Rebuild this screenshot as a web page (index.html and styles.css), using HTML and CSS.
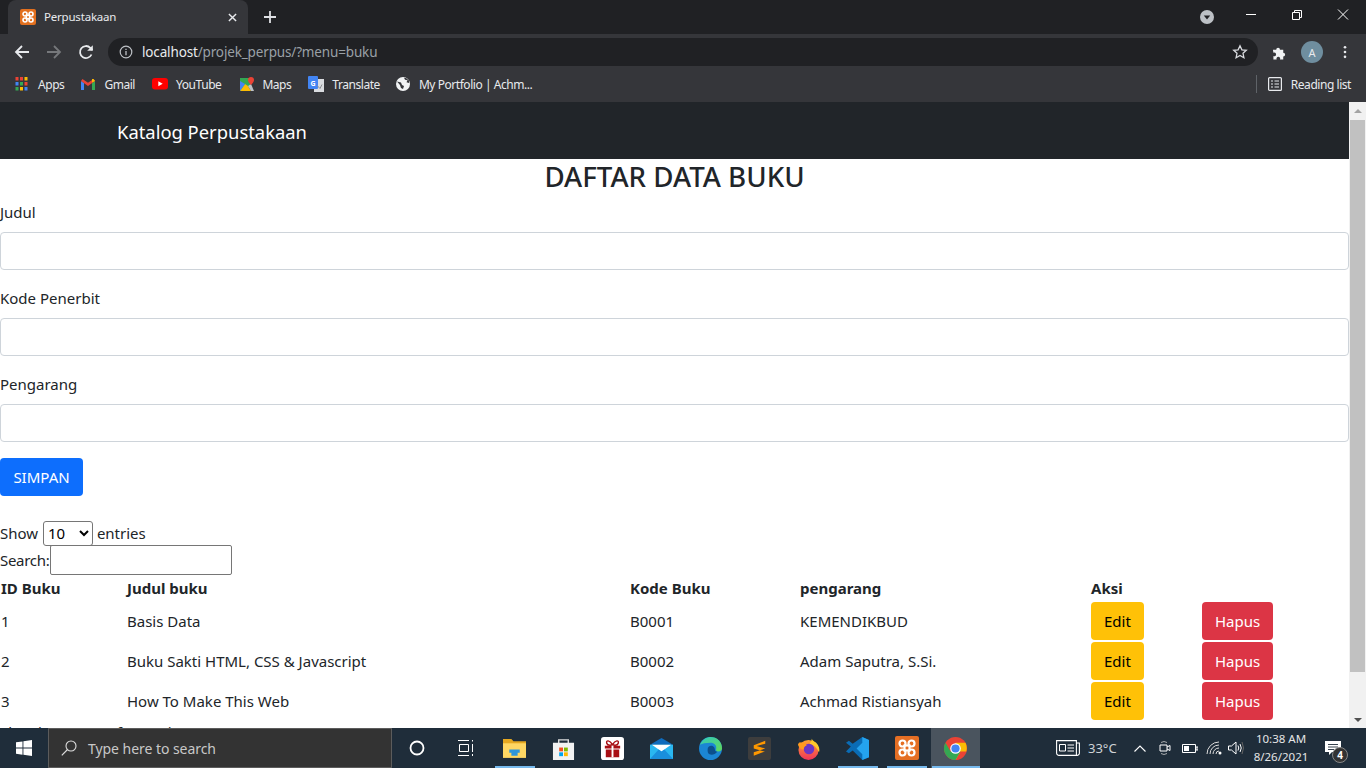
FILE: index.html
```html
<!DOCTYPE html>
<html lang="en">
<head>
    <meta charset="UTF-8">
    <meta name="viewport" content="width=device-width, initial-scale=1.0">
    <title>Perpustakaan</title>
    <link rel="stylesheet" href="styles.css">
</head>
<body>
    <!-- browser frame -->
    <div class="tabstrip">
        <div class="tab">
            <svg class="favicon" viewBox="0 0 24 24"><rect width="24" height="24" rx="3" fill="#e2701f"/><g fill="none" stroke="#fff" stroke-width="2.400"><circle cx="7.500" cy="7.500" r="3"/><circle cx="16.500" cy="7.500" r="3"/><circle cx="7.500" cy="16.500" r="3"/><circle cx="16.500" cy="16.500" r="3"/><rect x="9.500" y="9.500" width="5" height="5"/></g></svg>
            <span class="tab-title">Perpustakaan</span>
            <svg class="tab-close" viewBox="0 0 10 10"><path d="M1 1l8 8M9 1l-8 8" stroke="#e8eaed" stroke-width="1.600"/></svg>
        </div>
        <svg class="new-tab" viewBox="0 0 12 12"><path d="M6 0v12M0 6h12" stroke="#dfe1e5" stroke-width="1.800"/></svg>
        <div class="tabstrip-right">
            <span class="tab-search"><svg viewBox="0 0 14 14"><circle cx="7" cy="7" r="7" fill="#bdc1c6"/><path d="M3.800 5.500h6.400L7 9.500z" fill="#202124"/></svg></span>
            <svg class="win-btn" viewBox="0 0 46 30"><path d="M18 14.500h10" stroke="#fff"/></svg>
            <svg class="win-btn" viewBox="0 0 46 30"><path d="M18.500 12.500h7v7h-7zM20.500 12.500v-2h7v7h-2" fill="none" stroke="#fff"/></svg>
            <svg class="win-btn" viewBox="0 0 46 30"><path d="M18 9.500l10 10M28 9.500l-10 10" stroke="#fff"/></svg>
        </div>
    </div>
    <div class="toolbar">
        <svg class="nav-icon" viewBox="0 0 16 16"><path d="M15 8H2M8 2L2 8l6 6" fill="none" stroke="#e8eaed" stroke-width="1.800"/></svg>
        <svg class="nav-icon" viewBox="0 0 16 16"><path d="M1 8h13M8 2l6 6-6 6" fill="none" stroke="#76787b" stroke-width="1.800"/></svg>
        <svg class="nav-icon" viewBox="0 0 16 16"><path d="M13.500 10.500A6 6 0 1 1 12.300 3.800L14.500 6" fill="none" stroke="#e8eaed" stroke-width="1.800"/><path d="M14.800 1.200v5.600H9.200z" fill="#e8eaed"/></svg>
        <div class="omnibox">
            <svg class="info-icon" viewBox="0 0 14 14"><circle cx="7" cy="7" r="5.800" fill="none" stroke="#bdc1c6" stroke-width="1.200"/><path d="M7 6v4.200M7 3.800v1.200" stroke="#bdc1c6" stroke-width="1.300"/></svg>
            <span class="url"><b>localhost</b>/projek_perpus/?menu=buku</span>
            <svg class="star-icon" viewBox="0 0 16 16"><path d="M8 1.800l1.900 4 4.400.5-3.300 3 .9 4.400L8 11.500l-3.900 2.200.9-4.400-3.300-3 4.400-.5z" fill="none" stroke="#dadce0" stroke-width="1.300"/></svg>
        </div>
        <svg class="puzzle" viewBox="0 0 16 16"><path d="M1 5h3.500a2 2 0 1 1 4 0H12v3.200a2 2 0 1 1 0 4V15.500H8.500a2 2 0 1 0-3.500 0H1.500v-3.700a2 2 0 1 0 0-3.600z" fill="#f1f3f4"/></svg>
        <span class="avatar">A</span>
        <svg class="kebab" viewBox="0 0 4 16"><circle cx="2" cy="2.500" r="1.500" fill="#e8eaed"/><circle cx="2" cy="8" r="1.500" fill="#e8eaed"/><circle cx="2" cy="13.500" r="1.500" fill="#e8eaed"/></svg>
    </div>
    <div class="bookmarks">
        <a class="bm bm-apps">
            <svg viewBox="0 0 12 14"><rect x="0" y="0" width="3" height="3.500" fill="#ea4335"/><rect x="4.500" y="0" width="3" height="3.500" fill="#ea4335"/><rect x="9" y="0" width="3" height="3.500" fill="#fbbc04"/><rect x="0" y="5" width="3" height="3.500" fill="#4285f4"/><rect x="4.500" y="5" width="3" height="3.500" fill="#34a853"/><rect x="9" y="5" width="3" height="3.500" fill="#ea4335"/><rect x="0" y="10" width="3" height="3.500" fill="#34a853"/><rect x="4.500" y="10" width="3" height="3.500" fill="#fbbc04"/><rect x="9" y="10" width="3" height="3.500" fill="#4285f4"/></svg>
            Apps
        </a>
        <a class="bm bm-gmail">
            <svg viewBox="0 0 14 11"><path d="M0 2v9h3V4z" fill="#4285f4"/><path d="M14 2v9h-3V4z" fill="#34a853"/><path d="M0 2l7 5 7-5-1.500-2L7 3.800 1.500 0z" fill="#ea4335"/><path d="M11 3.500V0h1.500L14 2z" fill="#fbbc04"/></svg>
            Gmail
        </a>
        <a class="bm bm-yt">
            <svg viewBox="0 0 16 12"><rect width="16" height="11.500" rx="3" fill="#f00"/><path d="M6.300 3.300l4.400 2.500-4.400 2.500z" fill="#fff"/></svg>
            YouTube
        </a>
        <a class="bm bm-maps">
            <svg viewBox="0 0 14 14"><path d="M0 1h10v8L0 14z" fill="#34a853"/><path d="M0 14l5-7 3 2 3 5z" fill="#fbbc04"/><path d="M0 4l5 3-5 7z" fill="#4285f4"/><path d="M8 9l3-2 3 7h-3z" fill="#bdc1c6"/><path d="M11 0a3 3 0 0 1 3 3c0 2-3 5-3 5S8 5 8 3a3 3 0 0 1 3-3z" fill="#ea4335"/></svg>
            Maps
        </a>
        <a class="bm bm-trans">
            <svg viewBox="0 0 16 16"><rect x="6" y="3" width="10" height="13" fill="#dadce0"/><rect width="10" height="13" rx="1" fill="#4285f4"/><text x="2.500" y="9.500" class="g-letter">G</text><path d="M9 9.500l3 3 2-4" fill="none" stroke="#8a8d91"/></svg>
            Translate
        </a>
        <a class="bm bm-port">
            <svg viewBox="0 0 14 14"><circle cx="7" cy="7" r="7" fill="#f1f3f4"/><path d="M1 4.500l4 1 1 2.500 2 1-1 3-2-1-1-3zM8 .800l1 2 2.500.5-1 2L13 6V3.500L10 1z" fill="#35363a"/></svg>
            My Portfolio | Achm...
        </a>
        <a class="bm bm-read">
            <svg viewBox="0 0 14 14"><rect x=".6" y=".6" width="12.800" height="12.800" rx="1" fill="none" stroke="#e8eaed" stroke-width="1.200"/><path d="M3 4h2M6.500 4H11M3 7h2M6.500 7H11M3 10h2M6.500 10H11" stroke="#e8eaed" stroke-width="1.200"/></svg>
            Reading list
        </a>
    </div>

    <!-- page -->
    <div class="viewport">
        <div class="page">
            <nav class="navbar"><span class="brand">Katalog Perpustakaan</span></nav>
            <h2 class="title">DAFTAR DATA BUKU</h2>
            <form class="book-form">
                <label class="field-label">Judul</label>
                <input class="field" type="text">
                <label class="field-label">Kode Penerbit</label>
                <input class="field" type="text">
                <label class="field-label">Pengarang</label>
                <input class="field" type="text">
                <button type="button" class="btn btn-primary">SIMPAN</button>
            </form>
            <div class="dt-length">Show <select class="dt-select"><option>10</option></select> entries</div>
            <div class="dt-search"><span class="dt-search-label">Search:</span><input class="dt-input" type="text"></div>
            <table class="books">
                <thead>
                    <tr><th class="c-id">ID Buku</th><th class="c-judul">Judul buku</th><th class="c-kode">Kode Buku</th><th class="c-peng">pengarang</th><th class="c-aksi">Aksi</th><th></th></tr>
                </thead>
                <tbody>
                    <tr><td>1</td><td>Basis Data</td><td>B0001</td><td>KEMENDIKBUD</td><td><a class="btn btn-warning">Edit</a></td><td><a class="btn btn-danger">Hapus</a></td></tr>
                    <tr><td>2</td><td>Buku Sakti HTML, CSS &amp; Javascript</td><td>B0002</td><td>Adam Saputra, S.Si.</td><td><a class="btn btn-warning">Edit</a></td><td><a class="btn btn-danger">Hapus</a></td></tr>
                    <tr><td>3</td><td>How To Make This Web</td><td>B0003</td><td>Achmad Ristiansyah</td><td><a class="btn btn-warning">Edit</a></td><td><a class="btn btn-danger">Hapus</a></td></tr>
                </tbody>
            </table>
            <div class="dt-info">Showing 1 to 3 of 3 entries</div>
        </div>
        <div class="scrollbar">
            <span class="arrow-up"></span>
            <span class="thumb"></span>
            <span class="arrow-down"></span>
        </div>
    </div>

    <!-- windows taskbar -->
    <div class="taskbar">
        <span class="start"><svg viewBox="0 0 16 16"><path d="M0 2.300l6.500-.9v6.200H0zM7.400 1.300L16 0v7.600H7.400zM0 8.500h6.500v6.200L0 13.700zM7.400 8.500H16V16l-8.600-1.200z" fill="#fff"/></svg></span>
        <div class="searchbox">
            <svg viewBox="0 0 16 16"><circle cx="10" cy="6" r="5" fill="none" stroke="#ddd" stroke-width="1.100"/><path d="M6.500 9.500L.8 15.300" stroke="#ddd" stroke-width="1.200"/></svg>
            <span class="search-hint">Type here to search</span>
        </div>
        <span class="slot"><svg class="ico16" viewBox="0 0 16 16"><circle cx="8" cy="8" r="6.500" fill="none" stroke="#fff" stroke-width="1.800"/></svg></span>
        <span class="slot"><svg class="ico16" viewBox="0 0 16 16"><path d="M0 .5h11M0 15.500h11M1.500 4.500h9v7h-9zM14.500 0v1.500M14.500 4v8M14.500 14v2" fill="none" stroke="#fff"/></svg></span>
        <span class="slot on"><svg class="ico22" viewBox="0 0 22 20"><path d="M0 1h8l2 2h12v15H0z" fill="#e6a820"/><path d="M0 5h22v14H0z" fill="#ffd763"/><path d="M6 11h10v3h-2v3H8v-3H6z" fill="#2f96d9"/></svg></span>
        <span class="slot"><svg class="ico22" viewBox="0 0 24 24"><path d="M7 7V3h10v4" fill="none" stroke="#ddd" stroke-width="1.500"/><path d="M1 6h22v18H1z" fill="#f2f2f2"/><path d="M7.500 11h4v4h-4z" fill="#f25022"/><path d="M12.500 11h4v4h-4z" fill="#7fba00"/><path d="M7.500 16h4v4h-4z" fill="#00a4ef"/><path d="M12.500 16h4v4h-4z" fill="#ffb900"/></svg></span>
        <span class="slot"><svg class="ico22" viewBox="0 0 24 24"><rect width="24" height="24" rx="3" fill="#fff"/><path d="M4 9h16v3H4zM5 13h14v8H5z" fill="#a80f14"/><path d="M11 9h2v12h-2z" fill="#fff"/><path d="M12 8C9 3 5 3 6 6.500S12 8 12 8zm0 0c3-5 7-5 6-1.500S12 8 12 8z" fill="none" stroke="#a80f14" stroke-width="1.500"/></svg></span>
        <span class="slot"><svg class="ico22" viewBox="0 0 24 24"><path d="M0 8l12-7 12 7z" fill="#0f6cbd"/><path d="M0 8h24v15H0z" fill="#2ab7f0"/><path d="M2 8h20L12 15z" fill="#fff"/><path d="M0 23L9 13l3 2 3-2 9 10z" fill="#1a8fdc"/></svg></span>
        <span class="slot"><svg class="ico22" viewBox="0 0 24 24"><defs><linearGradient id="edgeA" x1="0" y1="0" x2="1" y2="1"><stop offset="0" stop-color="#31c9c0"/><stop offset="1" stop-color="#63d957"/></linearGradient></defs><circle cx="12" cy="12" r="12" fill="#1b86d4"/><path d="M1 8C4 1 10 0 12 0c7 0 12 5 12 12 0 2-2 3-4 3-3 0-2-2-2-4 0-3-3-5-6-5C7 6 3 7 1 8z" fill="url(#edgeA)"/><path d="M9 13c0-4 5-5 7-2 1 2 0 4 3 4.500-2 3-6 3.500-8 2.500-2-1-2-3-2-5z" fill="#0c4f8c"/></svg></span>
        <span class="slot"><svg class="ico22" viewBox="0 0 24 24"><rect width="24" height="24" rx="2" fill="#3d3d3d"/><path d="M18 4L6 8.500v3.500l12 3.500V12L9 9.500l9-2.500zM18 12v3L6 19.500V16z" fill="#ff9800"/></svg></span>
        <span class="slot"><svg class="ico22" viewBox="0 0 24 24"><defs><linearGradient id="foxA" x1="0" y1="0" x2="0" y2="1"><stop offset="0" stop-color="#ffa52c"/><stop offset="1" stop-color="#f0325c"/></linearGradient></defs><circle cx="12" cy="13.500" r="10.500" fill="url(#foxA)"/><path d="M15 0c0 3 2 4 5 6 3 3 4 7 3 10-2-5-6-8-10-9 2-2 3-4 2-7z" fill="#ffc92c"/><circle cx="12.500" cy="12.500" r="5.500" fill="#6b36c4"/><path d="M1 8c1-2 2-3 3-2 2-1 5 0 6 3-2 0-3 2-3 4-3 0-5-2-6-5z" fill="#ff9a1e"/></svg></span>
        <span class="slot on"><svg class="ico22" viewBox="0 0 24 24"><path d="M17 0l7 3v18l-7 3L7 14l-4 3-3-2 5-5-5-4 3-2 4 3z" fill="#0a6cb5"/><path d="M17 0l7 3v18l-7 3zM17 6l-6 6 6 6z" fill="#24a3ee" fill-rule="evenodd"/></svg></span>
        <span class="slot on"><svg class="ico24" viewBox="0 0 24 24"><rect width="24" height="24" rx="2" fill="#e56f24"/><g fill="none" stroke="#fff" stroke-width="2.200"><circle cx="7.500" cy="7.500" r="3"/><circle cx="16.500" cy="7.500" r="3"/><circle cx="7.500" cy="16.500" r="3"/><circle cx="16.500" cy="16.500" r="3"/><rect x="9.500" y="9.500" width="5" height="5"/></g></svg></span>
        <span class="slot active"><svg class="ico22" viewBox="0 0 24 24"><circle cx="12" cy="12" r="12" fill="#ea4335"/><path d="M12 24l5.200-9h6A12 12 0 0 0 22.400 6H12z" fill="#fbbc04"/><path d="M1.600 6A12 12 0 0 0 12 24l5.200-9H6.800z" fill="#34a853"/><circle cx="12" cy="12" r="5.500" fill="#fff"/><circle cx="12" cy="12" r="4.300" fill="#4285f4"/></svg></span>
        <div class="tray">
            <svg class="t-news" viewBox="0 0 24 16"><path d="M.6.600h19.800v14.800H3a2.400 2.400 0 0 1-2.400-2.400zM20.400 3h3v10a2.400 2.400 0 0 1-2.400 2.400h-1" fill="none" stroke="#fff" stroke-width="1.100"/><path d="M3.500 4.500h6v6.500h-6zM11.500 5H18M11.500 8H18M11.500 11H18" fill="none" stroke="#fff"/></svg>
            <span class="t-temp">33°C</span>
            <svg class="t-chev" viewBox="0 0 12 7"><path d="M.5 6.500L6 1l5.500 5.500" fill="none" stroke="#fff" stroke-width="1.100"/></svg>
            <svg class="t-meet" viewBox="0 0 12 16"><path d="M1 5h7v6H1zM8 7l3-1.500v5L8 9" fill="none" stroke="#fff"/><path d="M2 2.500q3-2 6 0M2 13.500q3 2 6 0" fill="none" stroke="#ccc" stroke-width=".8"/></svg>
            <svg class="t-batt" viewBox="0 0 16 9"><path d="M.5.500h13v8H.5zM14 3h2v3h-2z" fill="none" stroke="#fff"/><path d="M2 2h5v5H2z" fill="#fff"/></svg>
            <svg class="t-wifi" viewBox="0 0 16 14"><path d="M1 13A12 12 0 0 1 13 1M4 13a9 9 0 0 1 9-9M7 13a6 6 0 0 1 6-6M10 13a3 3 0 0 1 3-3" fill="none" stroke="#ddd"/><circle cx="14" cy="12" r="1.500" fill="#fff"/></svg>
            <svg class="t-vol" viewBox="0 0 16 14"><path d="M.5 5h3L8 1v12L3.500 9h-3z" fill="none" stroke="#fff"/><path d="M10 4.500q1.500 2.500 0 5M12 3q2.500 4 0 8" fill="none" stroke="#fff"/><path d="M14 1q3 6 0 12" fill="none" stroke="#666"/></svg>
            <div class="t-clock"><span>10:38 AM</span><span>8/26/2021</span></div>
            <div class="t-notif">
                <svg viewBox="0 0 16 14"><path d="M0 0h16v11H7l-3 3v-3H0z" fill="#fff"/><path d="M3 3.500h10M3 6h10M3 8.500h6" stroke="#1f2d3a" stroke-width=".9"/></svg>
                <span class="t-badge">4</span>
            </div>
        </div>
    </div>
</body>
</html>
```

FILE: styles.css
```css
* {
    box-sizing: border-box;
}
html, body {
    margin: 0;
    height: 100%;
    overflow: hidden;
}
body {
    display: flex;
    flex-direction: column;
    width: 1366px;
    height: 768px;
    font-family: "Noto Sans", "Open Sans", Arial, sans-serif;
    color: #212529;
    background: #fff;
}

/* tab strip */
.tabstrip {
    height: 34px;
    background: #202124;
    display: flex;
    align-items: flex-end;
    padding-left: 8px;
    color: #fff;
}
.tab {
    width: 240px;
    height: 34px;
    background: #35363a;
    border-radius: 8px 8px 0 0;
    display: flex;
    align-items: center;
    padding: 0 7px 0 12px;
    font-size: 11.5px;
}
.favicon {
    width: 16px;
    height: 16px;
    margin-right: 8px;
}
.tab-title {
    flex: 1;
    padding-bottom: 2px;
    letter-spacing: -0.2px;
    color: #e8eaed;
}
.tab-close {
    width: 9px;
    height: 9px;
    margin-right: 4px;
}
.new-tab {
    width: 12px;
    height: 12px;
    margin: 0 0 11px 16px;
}
.tabstrip-right {
    margin-left: auto;
    display: flex;
    align-items: flex-start;
    height: 34px;
}
.tab-search {
    display: flex;
    width: 14px;
    height: 14px;
    margin: 10px 14px 0 0;
}
.win-btn {
    width: 46px;
    height: 30px;
}

/* toolbar */
.toolbar {
    height: 34px;
    background: #35363a;
    display: flex;
    align-items: center;
    padding: 2px 0 0 14px;
}
.nav-icon {
    width: 16px;
    height: 16px;
    margin-right: 16px;
}
.omnibox {
    width: 1150px;
    height: 28px;
    margin-left: -2px;
    background: #202124;
    border-radius: 14px;
    display: flex;
    align-items: center;
    padding: 0 10px 0 11px;
    font-size: 13.5px;
}
.info-icon {
    width: 14px;
    height: 14px;
    margin-right: 9px;
}
.url {
    flex: 1;
    color: #9aa0a6;
    letter-spacing: -0.15px;
}
.url b {
    font-weight: 400;
    color: #e8eaed;
}
.star-icon {
    width: 16px;
    height: 16px;
}
.puzzle {
    width: 15px;
    height: 15px;
    margin-left: 14px;
}
.avatar {
    width: 22px;
    height: 22px;
    margin-left: 14px;
    border-radius: 50%;
    background: #6f8e9f;
    color: #e8eaed;
    font-size: 11px;
    display: flex;
    align-items: center;
    justify-content: center;
}
.kebab {
    width: 4px;
    height: 14px;
    margin-left: 20px;
}

/* bookmarks */
.bookmarks {
    height: 34px;
    background: #35363a;
    display: flex;
    align-items: center;
    padding-bottom: 2px;
    color: #e8eaed;
    font-size: 12px;
    letter-spacing: -0.45px;
}
.bm {
    display: flex;
    align-items: center;
    white-space: nowrap;
}
.bm svg {
    flex: none;
}
.bm-apps {
    margin-left: 15px;
}
.bm-apps svg {
    width: 13px;
    height: 14px;
    margin-right: 10px;
}
.bm-gmail {
    margin-left: 17px;
}
.bm-gmail svg {
    width: 14px;
    height: 11px;
    margin-right: 9px;
}
.bm-yt {
    margin-left: 17px;
}
.bm-yt svg {
    width: 16px;
    height: 12px;
    margin-right: 8px;
}
.bm-maps {
    margin-left: 19px;
}
.bm-maps svg {
    width: 14px;
    height: 14px;
    margin-right: 8px;
}
.bm-trans {
    margin-left: 17px;
}
.bm-trans svg {
    width: 16px;
    height: 16px;
    margin-right: 8px;
}
.g-letter {
    font-size: 7px;
    fill: #fff;
    font-weight: 700;
    letter-spacing: 0;
}
.bm-port {
    margin-left: 16px;
}
.bm-port svg {
    width: 14px;
    height: 14px;
    margin-right: 9px;
}
.bm-read {
    margin-left: auto;
    margin-right: 15px;
    height: 18px;
    padding-left: 11px;
    border-left: 1px solid #5f6368;
}
.bm-read svg {
    width: 14px;
    height: 14px;
    margin-right: 9px;
}

/* page */
.viewport {
    flex: 1;
    min-height: 0;
    display: flex;
}
.page {
    width: 1349px;
    overflow: hidden;
    font-size: 15px;
}
.navbar {
    height: 57px;
    background: #212529;
    display: flex;
    align-items: center;
    padding: 2px 0 0 117px;
}
.brand {
    color: #fff;
    font-size: 18.4px;
}
.title {
    margin: 0;
    height: 35px;
    line-height: 35px;
    text-align: center;
    font-size: 27.7px;
    font-weight: 500;
}
.book-form {
    display: flex;
    flex-direction: column;
    align-items: flex-start;
    margin-bottom: 24px;
}
.field-label {
    height: 24px;
    line-height: 24px;
    margin-bottom: 8px;
}
.book-form .field-label:first-child {
    margin-top: 6px;
}
.field {
    width: 100%;
    height: 38px;
    margin-bottom: 16px;
    border: 1px solid #ced4da;
    border-radius: 4px;
    background: #fff;
}
.btn {
    display: inline-block;
    height: 38px;
    padding: 0 12px;
    border: 1px solid transparent;
    border-radius: 4px;
    font: inherit;
    line-height: 36px;
}
.btn-primary {
    width: 83px;
    padding: 0;
    text-align: center;
    background: #0d6efd;
    color: #fff;
}
.btn-warning {
    background: #ffc107;
    color: #000;
}
.btn-danger {
    background: #dc3545;
    color: #fff;
}
.dt-length {
    height: 25px;
    line-height: 26px;
}
.dt-select {
    width: 50px;
    height: 25px;
    margin-left: 1px;
    font: inherit;
    background: #fff;
    border: 1px solid #767676;
    border-radius: 3px;
}
.dt-search {
    height: 30px;
    display: flex;
    align-items: center;
    margin-bottom: -1px;
}
.dt-search-label {
    width: 50px;
    letter-spacing: -0.3px;
}
.dt-input {
    width: 182px;
    height: 30px;
    border: 1px solid #767676;
    border-radius: 2px;
}
.books {
    width: 1349px;
    border-collapse: collapse;
    table-layout: fixed;
}
.books th,
.books td {
    padding: 1px;
    text-align: left;
    vertical-align: middle;
}
.books th {
    font-weight: 700;
    height: 27px;
}
.books td {
    height: 40px;
}
.c-id {
    width: 126px;
}
.c-judul {
    width: 503px;
}
.c-kode {
    width: 170px;
}
.c-peng {
    width: 291px;
}
.c-aksi {
    width: 111px;
}
.dt-info {
    margin-top: 1px;
}

/* scrollbar */
.scrollbar {
    width: 17px;
    background: #f1f1f1;
    display: flex;
    flex-direction: column;
    align-items: center;
}
.arrow-up {
    width: 0;
    height: 0;
    margin: 7px 0 7px;
    border: 4px solid transparent;
    border-top: 0;
    border-bottom: 4px solid #a3a3a3;
}
.thumb {
    width: 15px;
    height: 552px;
    background: #c1c1c1;
}
.arrow-down {
    width: 0;
    height: 0;
    margin-top: auto;
    margin-bottom: 6px;
    border: 4px solid transparent;
    border-bottom: 0;
    border-top: 4px solid #505050;
}

/* taskbar */
.taskbar {
    height: 40px;
    background: #1f2d3a;
    display: flex;
    align-items: stretch;
    color: #fff;
}
.start {
    width: 48px;
    display: flex;
    align-items: center;
    justify-content: center;
}
.start svg {
    width: 16px;
    height: 16px;
}
.searchbox {
    width: 344px;
    background: #333;
    border: 1px solid #5c5c5c;
    display: flex;
    align-items: center;
    padding-left: 12px;
    font-size: 14px;
    color: #c8c8c8;
}
.searchbox svg {
    width: 16px;
    height: 16px;
    margin-right: 11px;
}
.search-hint {
    letter-spacing: -0.05px;
}
.slot {
    width: 49px;
    display: flex;
    align-items: center;
    justify-content: center;
    position: relative;
}
.slot.on::after {
    content: "";
    position: absolute;
    left: 5px;
    right: 4px;
    bottom: 0;
    height: 2px;
    background: #76b9ed;
}
.slot.active {
    background: #4a545e;
}
.slot.active::after {
    content: "";
    position: absolute;
    left: 1px;
    right: 0;
    bottom: 0;
    height: 2px;
    background: #76b9ed;
}
.ico16 {
    width: 16px;
    height: 16px;
}
.ico22 {
    width: 23px;
    height: 23px;
}
.ico24 {
    width: 24px;
    height: 24px;
}
.tray {
    margin-left: auto;
    display: flex;
    align-items: center;
    font-size: 11.5px;
    color: #e6e6e6;
}
.t-news {
    width: 24px;
    height: 16px;
}
.t-temp {
    margin-left: 8px;
    width: 34px;
    font-size: 13px;
    color: #cfd3d6;
}
.t-chev {
    width: 12px;
    height: 7px;
    margin-left: 12px;
}
.t-meet {
    width: 12px;
    height: 16px;
    margin-left: 13px;
}
.t-batt {
    width: 16px;
    height: 9px;
    margin-left: 11px;
}
.t-wifi {
    width: 16px;
    height: 14px;
    margin-left: 8px;
}
.t-vol {
    width: 16px;
    height: 14px;
    margin-left: 6px;
}
.t-clock {
    width: 62px;
    margin-left: 6px;
    display: flex;
    flex-direction: column;
    align-items: center;
    gap: 2px;
    line-height: 16px;
}
.t-notif {
    width: 48px;
    margin-left: 6px;
    padding-right: 18px;
    position: relative;
    display: flex;
    justify-content: center;
}
.t-notif svg {
    width: 16px;
    height: 14px;
}
.t-badge {
    position: absolute;
    left: 14px;
    top: 6px;
    width: 16px;
    height: 16px;
    border-radius: 50%;
    background: #333;
    border: 1px solid #888;
    font-size: 10px;
    font-weight: 700;
    line-height: 14px;
    text-align: center;
    color: #fff;
}
```
